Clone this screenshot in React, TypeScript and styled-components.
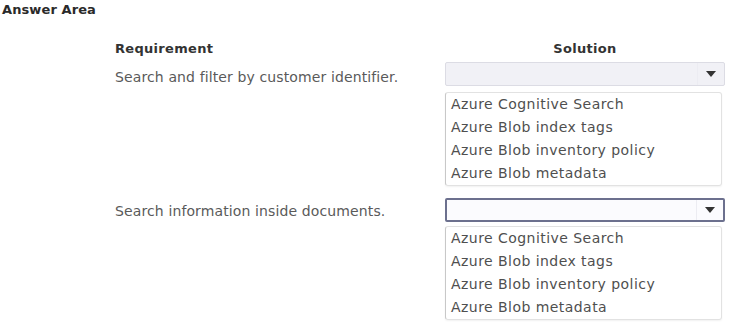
import React from "react";
import styled, { createGlobalStyle } from "styled-components";

const Global = createGlobalStyle`
  html, body { margin: 0; padding: 0; background: #fff; }
  body { font-family: "DejaVu Sans", "Open Sans", sans-serif; }
`;

const Page = styled.div`
  width: 729px;
  height: 323px;
  box-sizing: border-box;
  padding: 2px 0 0 2px;
  overflow: hidden;
`;

const Title = styled.div`
  font-weight: 700;
  font-size: 13px;
  letter-spacing: 0.1px;
  color: #2a2a2a;
  line-height: 16px;
`;

const Table = styled.div`
  display: grid;
  grid-template-columns: 330px 280px;
  margin: 22px 0 0 113px;
`;

const HeadCell = styled.div<{ $center?: boolean }>`
  font-weight: 700;
  font-size: 13px;
  color: #333;
  line-height: 18px;
  letter-spacing: 0.3px;
  text-align: ${(p) => (p.$center ? "center" : "left")};
  height: 22px;
`;

const ReqText = styled.div<{ $top: number }>`
  font-size: 14px;
  color: #5a5a5a;
  letter-spacing: 0.12px;
  line-height: 18px;
  padding-top: ${(p) => p.$top}px;
`;

const Dropdown = styled.div<{ $gapAfter: number }>`
  display: flex;
  flex-direction: column;
  margin-bottom: ${(p) => p.$gapAfter}px;
`;

const Select = styled.div<{ $focused?: boolean }>`
  height: 24px;
  box-sizing: border-box;
  border: ${(p) => (p.$focused ? "2px solid #6c708e" : "1px solid #dcdce4")};
  border-radius: 2px;
  background: ${(p) => (p.$focused ? "#fbfbfe" : "#f1f1f6")};
  display: flex;
  justify-content: flex-end;
`;

const Arrow = styled.div`
  width: 26px;
  display: flex;
  align-items: center;
  justify-content: center;
  border-left: 1px solid #ececf2;
`;

const List = styled.div<{ $mt: number }>`
  margin-top: ${(p) => p.$mt}px;
  margin-right: 3px;
  border: 1px solid #e2e2e2;
  border-left-color: #c8c8c8;
  border-radius: 3px;
  box-shadow: 0 1px 2px rgba(0, 0, 0, 0.06);
  display: flex;
  flex-direction: column;
  padding-left: 5px;
`;

const Item = styled.div`
  font-size: 14px;
  color: #4f4f4f;
  letter-spacing: 0.45px;
  line-height: 23px;
  height: 23px;
`;

const options = [
  "Azure Cognitive Search",
  "Azure Blob index tags",
  "Azure Blob inventory policy",
  "Azure Blob metadata",
];

const Caret = () => (
  <svg width="10" height="6" viewBox="0 0 10 6">
    <path d="M0 0 H10 L5 6 Z" fill="#333" />
  </svg>
);

const Drop = ({ focused, mt, gapAfter }: { focused?: boolean; mt: number; gapAfter: number }) => (
  <Dropdown $gapAfter={gapAfter}>
    <Select $focused={focused}>
      <Arrow>
        <Caret />
      </Arrow>
    </Select>
    <List $mt={mt}>
      {options.map((o) => (
        <Item key={o}>{o}</Item>
      ))}
    </List>
  </Dropdown>
);

export default function App() {
  return (
    <Page>
      <Global />
      <Title>Answer Area</Title>
      <Table>
        <HeadCell>Requirement</HeadCell>
        <HeadCell $center>Solution</HeadCell>
        <ReqText $top={6}>Search and filter by customer identifier.</ReqText>
        <Drop mt={6} gapAfter={12} />
        <ReqText $top={4}>Search information inside documents.</ReqText>
        <Drop focused mt={4} gapAfter={0} />
      </Table>
    </Page>
  );
}
